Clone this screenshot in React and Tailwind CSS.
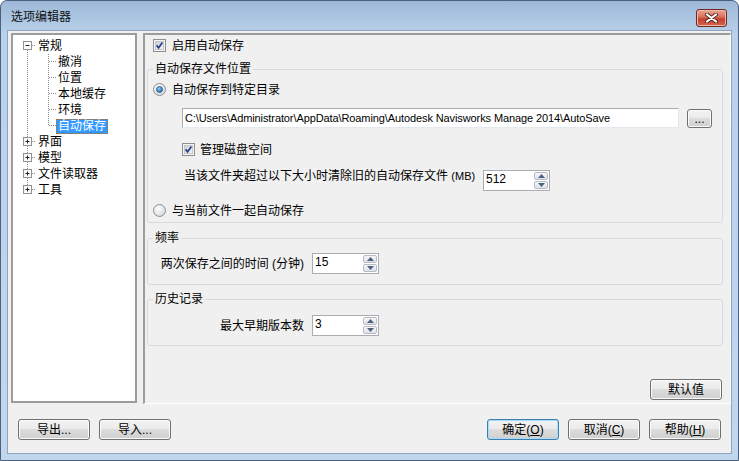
import React from 'react';

// ─── Small Win7-style controls ───────────────────────────────────────────────
function CheckBox() {
  return (
    <svg width="13" height="13" viewBox="0 0 13 13" className="shrink-0">
      <defs>
        <linearGradient id="cbg" x1="0" y1="0" x2="1" y2="1">
          <stop offset="0" stopColor="#cbcfd5" />
          <stop offset="1" stopColor="#f6f6f6" />
        </linearGradient>
      </defs>
      <rect x="0.5" y="0.5" width="12" height="12" fill="#f4f4f4" stroke="#8e8f8f" />
      <rect x="2.5" y="2.5" width="8" height="8" fill="url(#cbg)" stroke="#c3c6cb" />
      <path d="M3.6 6.4 L5.6 8.8 L9.4 3.6" fill="none" stroke="#2b3f86" strokeWidth="1.7" />
    </svg>
  );
}

function Radio({ checked }) {
  return (
    <svg width="13" height="13" viewBox="0 0 13 13" className="shrink-0">
      <defs>
        <radialGradient id="rbg" cx="0.4" cy="0.35" r="0.7">
          <stop offset="0" stopColor="#ffffff" />
          <stop offset="1" stopColor="#d4d6d9" />
        </radialGradient>
        <radialGradient id="rdot" cx="0.4" cy="0.35" r="0.7">
          <stop offset="0" stopColor="#8fd3fb" />
          <stop offset="1" stopColor="#1f5f9d" />
        </radialGradient>
      </defs>
      <circle cx="6.5" cy="6.5" r="6" fill="url(#rbg)" stroke="#8e8f8f" />
      {checked && <circle cx="6.5" cy="6.5" r="3" fill="url(#rdot)" stroke="#25598c" strokeWidth="0.8" />}
    </svg>
  );
}

function Spinner({ value }) {
  return (
    <div className="w-[67px] h-[21px] shrink-0 bg-white border border-[#abadb3] flex">
      <div className="flex-1 pl-[2px] pt-[1px] text-[12px] leading-[14px] text-black">{value}</div>
      <div className="w-[15px] flex flex-col gap-[1px] py-[1px] pr-[1px]">
        {['up', 'down'].map((d) => (
          <div
            key={d}
            className="flex-1 rounded-[2px] border border-[#b6bcc6] bg-[linear-gradient(#f6f6f6,#dfe2e6)] flex items-center justify-center"
          >
            <svg width="7" height="4" viewBox="0 0 7 4">
              {d === 'up' ? <path d="M0 4 L3.5 0 L7 4 Z" fill="#4d6185" /> : <path d="M0 0 L3.5 4 L7 0 Z" fill="#4d6185" />}
            </svg>
          </div>
        ))}
      </div>
    </div>
  );
}

function Btn({ children, primary, className = '' }) {
  return (
    <button
      className={`w-[72px] h-[21px] shrink-0 rounded-[3px] border text-[12px] leading-[14px] text-black bg-[linear-gradient(#f2f2f2_0%,#ebebeb_50%,#dddddd_50%,#cfcfcf_100%)] ${
        primary ? 'border-[#3c7fb1] shadow-[inset_0_0_0_1px_#a6dcf9]' : 'border-[#707070] shadow-[inset_0_0_0_1px_#fbfbfb]'
      } ${className}`}
    >
      {children}
    </button>
  );
}

// ─── Tree connector cells ─────────────────────────────────────────────────────
const dot = { stroke: '#8c8c8c', strokeDasharray: '1 1', strokeWidth: 1 };

function ExpandBox({ minus }) {
  return (
    <>
      <rect x="4.5" y="3.5" width="8" height="8" fill="#fafafa" stroke="#919191" />
      <path d="M6.5 7.5 H10.5" stroke="#222" />
      {!minus && <path d="M8.5 5.5 V9.5" stroke="#222" />}
    </>
  );
}

// root column, centre at x=8.5
function RootCell({ kind }) {
  return (
    <svg width="16" height="16" viewBox="0 0 16 16" className="shrink-0">
      {kind === 'first' && <path d="M8.5 12 V16" {...dot} />}
      {kind === 'pipe' && <path d="M8.5 0 V16" {...dot} />}
      {kind === 'mid' && <path d="M8.5 0 V16" {...dot} />}
      {kind === 'last' && <path d="M8.5 0 V4" {...dot} />}
      {kind !== 'pipe' && <path d="M13 7.5 H16" {...dot} />}
      {kind !== 'pipe' && <ExpandBox minus={kind === 'first'} />}
    </svg>
  );
}

function ChildCell({ last }) {
  return (
    <svg width="21" height="16" viewBox="0 0 21 16" className="shrink-0">
      <path d={last ? 'M13.5 0 V8' : 'M13.5 0 V16'} {...dot} />
      <path d="M14 7.5 H21" {...dot} />
    </svg>
  );
}

const children = ['撤消', '位置', '本地缓存', '环境', '自动保存'];
const roots = ['界面', '模型', '文件读取器', '工具'];

function Tree() {
  return (
    <div className="w-[126px] h-[370px] shrink-0 bg-white border-2 border-[#9c9c9c] pt-[3px] pl-[6px]">
      <div className="flex items-center h-[16px]">
        <RootCell kind="first" />
        <span className="ml-[2px] px-[1px] leading-[16px]">常规</span>
      </div>
      {children.map((c, i) => {
        const sel = i === children.length - 1;
        return (
          <div key={c} className="flex items-center h-[16px]">
            <RootCell kind="pipe" />
            <ChildCell last={sel} />
            <span
              className={`px-[1px] h-[15px] leading-[13px] border border-dotted ${
                sel ? 'bg-[#3399ff] text-white border-[#cc6600]' : 'border-transparent'
              }`}
            >
              {c}
            </span>
          </div>
        );
      })}
      {roots.map((r, i) => (
        <div key={r} className="flex items-center h-[16px]">
          <RootCell kind={i === roots.length - 1 ? 'last' : 'mid'} />
          <span className="ml-[2px] px-[1px] leading-[16px]">{r}</span>
        </div>
      ))}
    </div>
  );
}

function Group({ title, className = '', children }) {
  return (
    <fieldset className={`ml-[2px] mr-[7px] border border-[#d5dbe0] rounded-[3px] ${className}`}>
      <legend className="ml-[5px] px-[2px] leading-[16px]">{title}</legend>
      {children}
    </fieldset>
  );
}

// ─── Options panel ────────────────────────────────────────────────────────────
function Panel() {
  return (
    <div className="flex-1 h-[371px] flex flex-col border-l-2 border-t-2 border-[#9c9c9c] border-r border-b border-r-white border-b-white">
      <div className="mt-[4px] ml-[8px] h-[13px] flex items-center gap-[6px]">
        <CheckBox />
        <span className="leading-[16px]">启用自动保存</span>
      </div>

      <Group title="自动保存文件位置" className="mt-[9px] pb-[5px]">
        <div className="mt-[6px] ml-[5px] h-[13px] flex items-center gap-[6px]">
          <Radio checked />
          <span className="leading-[16px]">自动保存到特定目录</span>
        </div>
        <div className="mt-[12px] ml-[34px] flex items-start gap-[8px]">
          <div className="w-[497px] h-[20px] bg-white border border-[#abadb3] border-r-[#e3e9ef] border-b-[#e3e9ef] pl-[2px] text-[11px] tracking-[-0.1px] leading-[18px] whitespace-nowrap overflow-hidden">
            C:\Users\Administrator\AppData\Roaming\Autodesk Navisworks Manage 2014\AutoSave
          </div>
          <Btn className="!w-[25px] !h-[19px] mt-[1px] leading-[10px]">...</Btn>
        </div>
        <div className="mt-[15px] ml-[34px] h-[13px] flex items-center gap-[5px]">
          <CheckBox />
          <span className="leading-[16px]">管理磁盘空间</span>
        </div>
        <div className="mt-[12px] ml-[36px] flex items-start">
          <span className="w-[299px] leading-[16px] whitespace-nowrap">
            当该文件夹超过以下大小时清除旧的自动保存文件 <span className="text-[11px]">(MB)</span>
          </span>
          <div className="mt-[2px]">
            <Spinner value="512" />
          </div>
        </div>
        <div className="mt-[13px] ml-[5px] h-[13px] flex items-center gap-[6px]">
          <Radio />
          <span className="leading-[16px]">与当前文件一起自动保存</span>
        </div>
      </Group>

      <Group title="频率" className="mt-[7px] pb-[10px]">
        <div className="mt-[7px] flex items-center">
          <span className="w-[156px] text-right leading-[16px] whitespace-nowrap">两次保存之间的时间 (分钟)</span>
          <div className="ml-[8px]">
            <Spinner value="15" />
          </div>
        </div>
      </Group>

      <Group title="历史记录" className="mt-[6px] pb-[9px]">
        <div className="mt-[8px] flex items-center">
          <span className="w-[156px] text-right leading-[16px]">最大早期版本数</span>
          <div className="ml-[8px]">
            <Spinner value="3" />
          </div>
        </div>
      </Group>

      <div className="mt-[33px] mr-[8px] flex justify-end">
        <Btn>默认值</Btn>
      </div>
    </div>
  );
}

export default function App() {
  return (
    <div className="w-[739px] h-[461px] flex flex-col border border-[#4b607c] rounded-t-[7px] overflow-hidden bg-[linear-gradient(#9db9d8,#bad1ea_34px,#c1d7ee)] text-[12px] text-black font-['Liberation_Sans','Noto_Sans_CJK_SC',sans-serif]">
      {/* Title bar */}
      <div className="h-[29px] shrink-0 flex items-start justify-between pl-[10px] pr-[11px] pt-[8px]">
        <span className="leading-[16px] text-[#111]">选项编辑器</span>
        <div className="w-[31px] h-[18px] rounded-[3px] border border-[#6e2a20] bg-[linear-gradient(#eba895,#d66d5a_45%,#c3412e_55%,#d5644d)] flex items-center justify-center shadow-[inset_0_0_0_1px_#f0b7a8]">
          <svg width="13" height="10" viewBox="0 0 13 10">
            <path d="M2 1.5 L11 8.5 M11 1.5 L2 8.5" stroke="#5a2a22" strokeWidth="4" strokeLinecap="round" />
            <path d="M2 1.5 L11 8.5 M11 1.5 L2 8.5" stroke="#ffffff" strokeWidth="2.2" strokeLinecap="round" />
          </svg>
        </div>
      </div>

      {/* Client area */}
      <div className="mx-[6px] mb-[6px] h-[424px] shrink-0 flex flex-col border border-[#8ea5c0] bg-[#f0f0f0]">
        <div className="pt-[2px] pl-[3px] flex gap-[6px]">
          <Tree />
          <Panel />
        </div>
        <div className="mt-[15px] flex items-center pl-[10px] pr-[10px]">
          <Btn>导出...</Btn>
          <Btn className="ml-[9px]">导入...</Btn>
          <div className="flex-1" />
          <Btn primary>
            确定(<span className="underline">O</span>)
          </Btn>
          <Btn className="ml-[9px]">
            取消(<span className="underline">C</span>)
          </Btn>
          <Btn className="ml-[9px]">
            帮助(<span className="underline">H</span>)
          </Btn>
        </div>
      </div>
    </div>
  );
}
